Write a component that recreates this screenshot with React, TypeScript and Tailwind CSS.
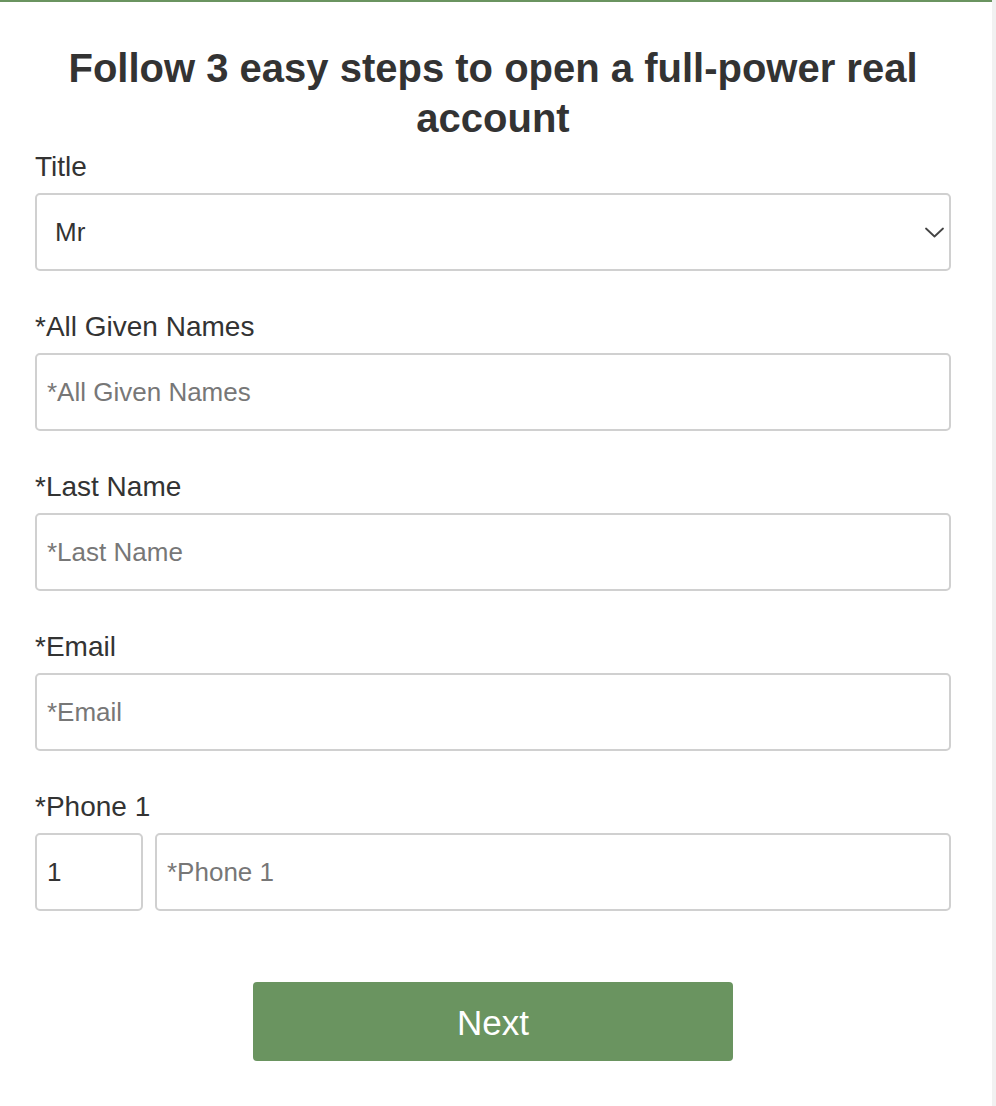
const font = { fontFamily: '"Liberation Sans", Arial, Helvetica, sans-serif' }

function Field({ label, placeholder }: { label: string; placeholder: string }) {
  return (
    <div className="mb-[41px]">
      <label className="block text-[28px] leading-[30px] text-[#333] mb-[11px]">{label}</label>
      <input
        placeholder={placeholder}
        className="w-full h-[78px] px-[10px] text-[26px] text-[#333] placeholder:text-[#777] border-2 border-[#d0d0d0] rounded-[5px] outline-none"
      />
    </div>
  )
}

export default function App() {
  return (
    <div className="flex min-h-[1106px] bg-white" style={font}>
      <div className="w-[992px] border-t-2 border-[#6a9460]">
        <div className="px-[35px] pt-[41px] pb-[45px] w-[986px]">
          <h1 className="text-center text-[40px] leading-[50px] font-bold text-[#333] px-[20px] mb-[9px]">
            Follow 3 easy steps to open a full-power real account
          </h1>

          {/* Title */}
          <div className="mb-[41px]">
            <label className="block text-[28px] leading-[30px] text-[#333] mb-[11px]">Title</label>
            <div className="relative">
              <select className="appearance-none w-full h-[78px] pl-[18px] pr-[40px] text-[26px] text-[#333] bg-white border-2 border-[#d0d0d0] rounded-[5px] outline-none">
                <option>Mr</option>
                <option>Mrs</option>
                <option>Ms</option>
              </select>
              <svg
                className="absolute right-[7px] top-[34px] pointer-events-none"
                width="19"
                height="11"
                viewBox="0 0 19 11"
                fill="none"
              >
                <path d="M1 1.5 9.5 9.5 18 1.5" stroke="#444" strokeWidth="1.8" strokeLinecap="round" strokeLinejoin="round" />
              </svg>
            </div>
          </div>

          <Field label="*All Given Names" placeholder="*All Given Names" />
          <Field label="*Last Name" placeholder="*Last Name" />
          <Field label="*Email" placeholder="*Email" />

          {/* Phone */}
          <div>
            <label className="block text-[28px] leading-[30px] text-[#333] mb-[11px]">*Phone 1</label>
            <div className="flex gap-[12px]">
              <input
                defaultValue="1"
                className="w-[108px] h-[78px] px-[10px] text-[26px] text-[#333] border-2 border-[#d0d0d0] rounded-[5px] outline-none"
              />
              <input
                placeholder="*Phone 1"
                className="flex-1 h-[78px] px-[10px] text-[26px] text-[#333] placeholder:text-[#777] border-2 border-[#d0d0d0] rounded-[5px] outline-none"
              />
            </div>
          </div>

          <div className="flex justify-center mt-[71px]">
            <button className="w-[480px] h-[79px] bg-[#6a9460] rounded-[4px] text-white text-[35px] leading-[79px] pt-[1px]">
              Next
            </button>
          </div>
        </div>
      </div>
      <div className="w-[4px] bg-[#f1f1f1]" />
    </div>
  )
}
